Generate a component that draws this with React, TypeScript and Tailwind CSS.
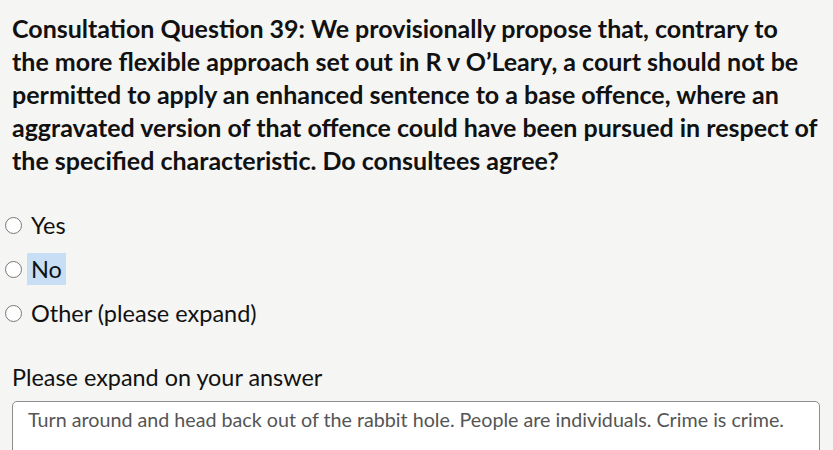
import React, { useState } from 'react';

const options = ['Yes', 'No', 'Other (please expand)'];

const App: React.FC = () => {
  const [answer, setAnswer] = useState<string | null>(null);

  return (
    <div className="min-h-screen bg-[#f5f5f3] text-[#111] font-['Lato','Liberation_Sans',sans-serif]">
      <div className="pl-3 pt-[12px] w-[833px]">
        <h2 className="w-[808px] text-[25px] leading-[33px] font-bold">
          Consultation Question 39: We provisionally propose that, contrary to the more flexible approach set out in R v O’Leary, a court should not be permitted to apply an enhanced sentence to a base offence, where an aggravated version of that offence could have been pursued in respect of the specified characteristic. Do consultees agree?
        </h2>

        <div className="mt-[26px] -ml-[7px] flex flex-col">
          {options.map((o) => (
            <label key={o} className="flex items-center h-[44px] gap-[5px] cursor-pointer">
              <input
                type="radio"
                name="q39"
                checked={answer === o}
                onChange={() => setAnswer(o)}
                className="w-[17px] h-[17px] m-0 accent-gray-500"
              />
              <span className={`text-[23.5px] leading-[32px] px-[4px] ${o === 'No' ? 'bg-[#c7def5]' : ''}`}>{o}</span>
            </label>
          ))}
        </div>

        <div className="mt-[27px] text-[23.4px] leading-[30px]">Please expand on your answer</div>
        <div className="mt-[9px] w-[808px] h-[60px] bg-white border border-[#8f8f8f] rounded-[5px] px-[15px] pt-[4px] text-[19.7px] leading-[28px] text-[#555]">
          Turn around and head back out of the rabbit hole. People are individuals. Crime is crime.
        </div>
      </div>
    </div>
  );
};

export default App;
